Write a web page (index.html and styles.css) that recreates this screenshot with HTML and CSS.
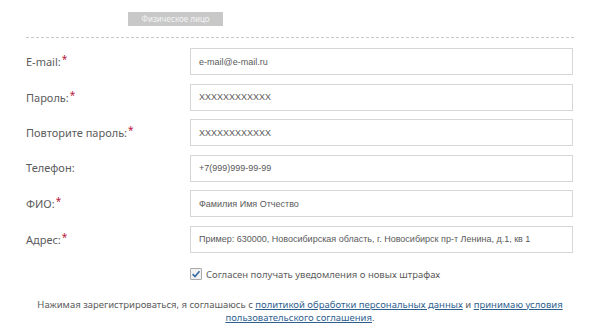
FILE: index.html
```html
<!DOCTYPE html>
<html lang="ru">
  <head>
    <meta charset="UTF-8" />
    <meta name="viewport" content="width=device-width, initial-scale=1.0" />
    <title>Регистрация</title>
    <link rel="stylesheet" href="styles.css">
  </head>
  <body>
    <div class="container">
      <div class="tabs">
        <span class="tab">Физическое лицо</span>
      </div>

      <form class="form">
        <div class="row">
          <label class="label">E-mail:<span class="req">*</span></label>
          <div class="field">e-mail@e-mail.ru</div>
        </div>
        <div class="row">
          <label class="label">Пароль:<span class="req">*</span></label>
          <div class="field">XXXXXXXXXXXX</div>
        </div>
        <div class="row">
          <label class="label">Повторите пароль:<span class="req">*</span></label>
          <div class="field">XXXXXXXXXXXX</div>
        </div>
        <div class="row">
          <label class="label">Телефон:</label>
          <div class="field">+7(999)999-99-99</div>
        </div>
        <div class="row">
          <label class="label">ФИО:<span class="req">*</span></label>
          <div class="field">Фамилия Имя Отчество</div>
        </div>
        <div class="row">
          <label class="label">Адрес:<span class="req">*</span></label>
          <div class="field">Пример: 630000, Новосибирская область, г. Новосибирск пр-т Ленина, д.1, кв 1</div>
        </div>

        <div class="agree">
          <span class="check">
            <svg width="10" height="10" viewBox="0 0 10 10">
              <path d="M1.6 5.2 L4 7.5 L8.5 2.3" fill="none" stroke="#3b6ea5" stroke-width="1.7" />
            </svg>
          </span>
          <span class="agree-text">Согласен получать уведомления о новых штрафах</span>
        </div>
      </form>

      <p class="terms">
        Нажимая зарегистрироваться, я соглашаюсь с <a href="">политикой обработки персональных данных</a> и <a href="">принимаю условия пользовательского соглашения</a>.
      </p>
    </div>
  </body>
</html>
```

FILE: styles.css
```css
body {
  margin: 0;
  background: #fff;
  font-family: "Noto Sans", "DejaVu Sans", sans-serif;
  color: #555;
}

.container {
  width: 548px;
  margin-left: 26px;
  padding-top: 12px;
}

.tabs {
  display: flex;
  padding-left: 102px;
  padding-bottom: 11px;
  border-bottom: 1px dashed #c8c8c8;
}

.tab {
  height: 14px;
  line-height: 14px;
  width: 95px;
  text-align: center;
  background: #c8c8c8;
  color: #f4f4f4;
  font-size: 8px;
}

.form {
  margin: 0;
  padding-top: 10px;
  display: flex;
  flex-direction: column;
  gap: 8.6px;
}

.row {
  display: flex;
  align-items: center;
}

.label {
  width: 164px;
  font-size: 11px;
  line-height: 14px;
  color: #5c5c5c;
}

.req {
  color: #b8163a;
  font-size: 10px;
  line-height: 1;
  vertical-align: 3px;
  margin-left: 1px;
}

.field {
  width: 383px;
  height: 27px;
  box-sizing: border-box;
  border: 1px solid #d6d6d6;
  padding: 0 8px;
  display: flex;
  align-items: center;
  font-family: "Liberation Sans", Arial, sans-serif;
  font-size: 9px;
  color: #5a5a5a;
}

.agree {
  display: flex;
  align-items: center;
  margin-top: 6px;
  padding-left: 164px;
}

.check {
  width: 12px;
  height: 12px;
  box-sizing: border-box;
  border: 1px solid #aaa;
  border-radius: 1px;
  background: #f2f2f2;
  display: flex;
  align-items: center;
  justify-content: center;
  margin-right: 4px;
}

.agree-text {
  font-size: 9.5px;
  color: #5c5c5c;
}

.terms {
  margin: 17px 0 0 -14px;
  width: 576px;
  text-align: center;
  font-size: 9.5px;
  line-height: 13px;
  color: #5c5c5c;
}

.terms a {
  color: #2f5f8f;
  text-decoration: underline;
}
```
